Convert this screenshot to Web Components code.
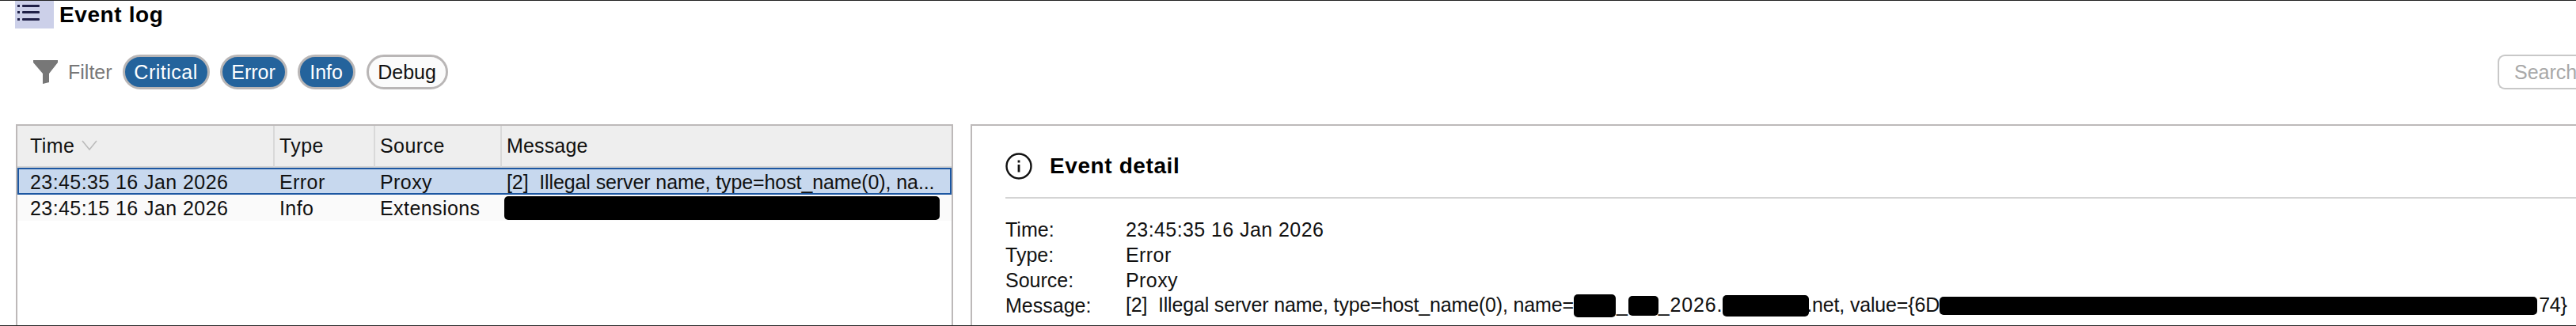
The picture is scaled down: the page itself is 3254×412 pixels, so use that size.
<!doctype html>
<html><head><meta charset="utf-8">
<style>
html,body{margin:0;padding:0;background:#fff}
body{font:25px "Liberation Sans",Arial,sans-serif;letter-spacing:.42px;color:#111;overflow:hidden}
</style></head>
<body>
<event-app>
  <title-bar>Event log</title-bar>
  <filter-bar>
    <filter-chip on style="width:110px;letter-spacing:.5px">Critical</filter-chip>
    <filter-chip on style="width:85px">Error</filter-chip>
    <filter-chip on style="width:73px">Info</filter-chip>
    <filter-chip style="width:103px;margin-left:1px">Debug</filter-chip>
  </filter-bar>
  <split-view>
    <log-table slot="left">
      <log-head sorted>Time</log-head><log-head>Type</log-head><log-head>Source</log-head><log-head style="letter-spacing:.15px">Message</log-head>
      <log-row selected>
        <log-cell>23:45:35 16 Jan 2026</log-cell><log-cell>Error</log-cell><log-cell>Proxy</log-cell><log-cell style="letter-spacing:-.1px">[2]&nbsp; Illegal server name, type=host_name(0), na...</log-cell>
      </log-row>
      <log-row>
        <log-cell>23:45:15 16 Jan 2026</log-cell><log-cell>Info</log-cell><log-cell>Extensions</log-cell><log-cell><black-out w="550" h="30" style="margin-left:-3px;margin-top:-2px"></black-out></log-cell>
      </log-row>
    </log-table>
    <event-detail slot="right">
      <detail-row label="Time:">23:45:35 16 Jan 2026</detail-row>
      <detail-row label="Type:">Error</detail-row>
      <detail-row label="Source:">Proxy</detail-row>
      <detail-row label="Message:" style="letter-spacing:-.16px">[2]&nbsp; Illegal server name, type=host_name(0), name=<black-out w="53" h="29" style="margin-right:1px"></black-out>_<black-out w="38" h="25" style="margin-left:1px"></black-out><span style="letter-spacing:.85px">_2026.</span><black-out w="109" h="27" style="margin-right:-3px;position:relative"></black-out>.net, value={6D<black-out w="755" h="23" style="margin-right:2px"></black-out>74}</detail-row>
    </event-detail>
  </split-view>
</event-app>
<script>
function def(name, css, html, init){
  customElements.define(name, class extends HTMLElement{
    constructor(){super();const r=this.attachShadow({mode:'open'});r.innerHTML='<style>'+css+'</style>'+html;}
    connectedCallback(){ if(init) init(this); }
  });
}
def('event-app',`:host{display:flex;flex-direction:column;box-sizing:border-box;height:412px;width:3254px;overflow:hidden;border-top:1px solid #222;border-bottom:1px solid #2a2a2a;background:#fff}`,`<slot></slot>`);
def('title-bar',`:host{display:flex;align-items:center;height:35px;flex:none;padding-left:19px;gap:7px}
.ic{width:49px;height:35px;background:#ccd0e9;display:flex;align-items:center;justify-content:center}
.t{font-size:28px;font-weight:700;letter-spacing:.6px;color:#000;line-height:35px}`,
`<div class="ic"><svg width="49" height="35" viewBox="0 0 49 35"><g fill="#1f2047"><rect x="3" y="5" width="3" height="3"/><rect x="3" y="13" width="3" height="3"/><rect x="3" y="22" width="3" height="3"/><rect x="9" y="5" width="22" height="3" rx="1"/><rect x="9" y="13" width="22" height="3" rx="1"/><rect x="9" y="22" width="22" height="3" rx="1"/></g></svg></div><div class="t"><slot></slot></div>`);
def('filter-bar',`:host{display:flex;align-items:center;height:44px;flex:none;margin-top:33px;padding-left:42px;letter-spacing:0}
svg{flex:none}
.l{color:#777;margin-left:13px;margin-right:13px}
.chips{display:flex;gap:13px}
.s{box-sizing:border-box;height:44px;margin-left:auto;width:99px;border:2px solid #c8c8c8;border-right:0;border-radius:9px 0 0 9px;color:#a8a8a8;padding-left:19px;line-height:40px;flex:none;white-space:nowrap}`,
`<svg width="31" height="30" viewBox="0 0 31 30"><path d="M0 0H31V3L20 17V28L12 30V17L0 3Z" fill="#777"/></svg><span class="l">Filter</span><div class="chips"><slot></slot></div><div class="s">Search</div>`);
def('filter-chip',`:host{display:flex;box-sizing:border-box;height:44px;align-items:center;justify-content:center;border-radius:22px;border:3px solid #b9b6b6;background:#fbfbfb;color:#111;flex:none}
:host([on]){background:#24639c;color:#fff}`,`<slot></slot>`);
def('split-view',`:host{display:flex;flex:1;min-height:0;margin-top:44px;padding-left:20px;gap:22px}
.l{flex:none;width:1184px;display:flex}.r{flex:1;display:flex;min-width:0}`,`<div class="l"><slot name="left"></slot></div><div class="r"><slot name="right"></slot></div>`);
def('log-table',`:host{display:grid;box-sizing:border-box;width:100%;grid-template-columns:325px 127px 160px 1fr;grid-auto-rows:max-content;align-content:start;border:solid #bdb9b9;border-width:2px 2px 0 2px;background:#fff;flex:1}`,`<slot></slot>`);
def('log-head',`:host{display:flex;align-items:center;height:53px;box-sizing:border-box;background:#eee;border-right:2px solid #d9d9d9;border-bottom:2px solid #d4d4d4;padding-left:6px;gap:9px;color:#111}
:host([sorted]){padding-left:16px}
:host(:last-of-type){border-right:0}
svg{display:none;margin-top:-3px}:host([sorted]) svg{display:block}`,`<slot></slot><svg width="20" height="13" viewBox="0 0 20 13"><path d="M1 1L10 12L19 1" fill="none" stroke="#bbb" stroke-width="1.6"/></svg>`);
def('log-row',`:host{display:grid;grid-column:1/-1;grid-template-columns:subgrid;height:33px;box-sizing:border-box;background:#fafafa;align-items:center;border:solid transparent;border-width:0 2px}
:host([selected]){height:34px;background:#c7d8ee;border:2px solid #1c57a2}`,`<slot></slot>`);
def('log-cell',`:host{display:flex;align-items:center;padding:2px 0 0 6px;white-space:nowrap;overflow:hidden;height:30px;box-sizing:border-box}
:host(:first-child){padding-left:14px}`,`<slot></slot>`);
def('black-out',`:host{display:inline-block;background:#000;border-radius:5px;vertical-align:middle}`,``,el=>{el.style.width=el.getAttribute('w')+'px';el.style.height=el.getAttribute('h')+'px';});
def('event-detail',`:host{display:block;box-sizing:border-box;flex:1;min-width:0;border:solid #bdb9b9;border-width:2px 0 0 2px;padding:34px 0 0 42px;overflow:hidden}
.h{display:flex;align-items:center;gap:22px;height:33px}
.t{font-size:28px;font-weight:700;letter-spacing:.6px;color:#000}
hr{border:0;height:2px;background:#d4d4d4;margin:23px 0 23px}`,
`<div class="h"><svg width="34" height="34" viewBox="0 0 34 34"><circle cx="17" cy="17" r="15.5" fill="none" stroke="#111" stroke-width="2.4"/><rect x="15.6" y="15" width="2.8" height="9.5" fill="#111"/><rect x="15.6" y="9.5" width="2.8" height="3" fill="#111"/></svg><div class="t">Event detail</div></div><hr><slot></slot>`);
def('detail-row',`:host{display:grid;grid-template-columns:152px 1fr;height:32px;align-items:center;white-space:nowrap}
.k{letter-spacing:0}`,`<div class="k"></div><div><slot></slot></div>`,el=>{el.shadowRoot.querySelector('.k').textContent=el.getAttribute('label');});
</script>
</body></html>
